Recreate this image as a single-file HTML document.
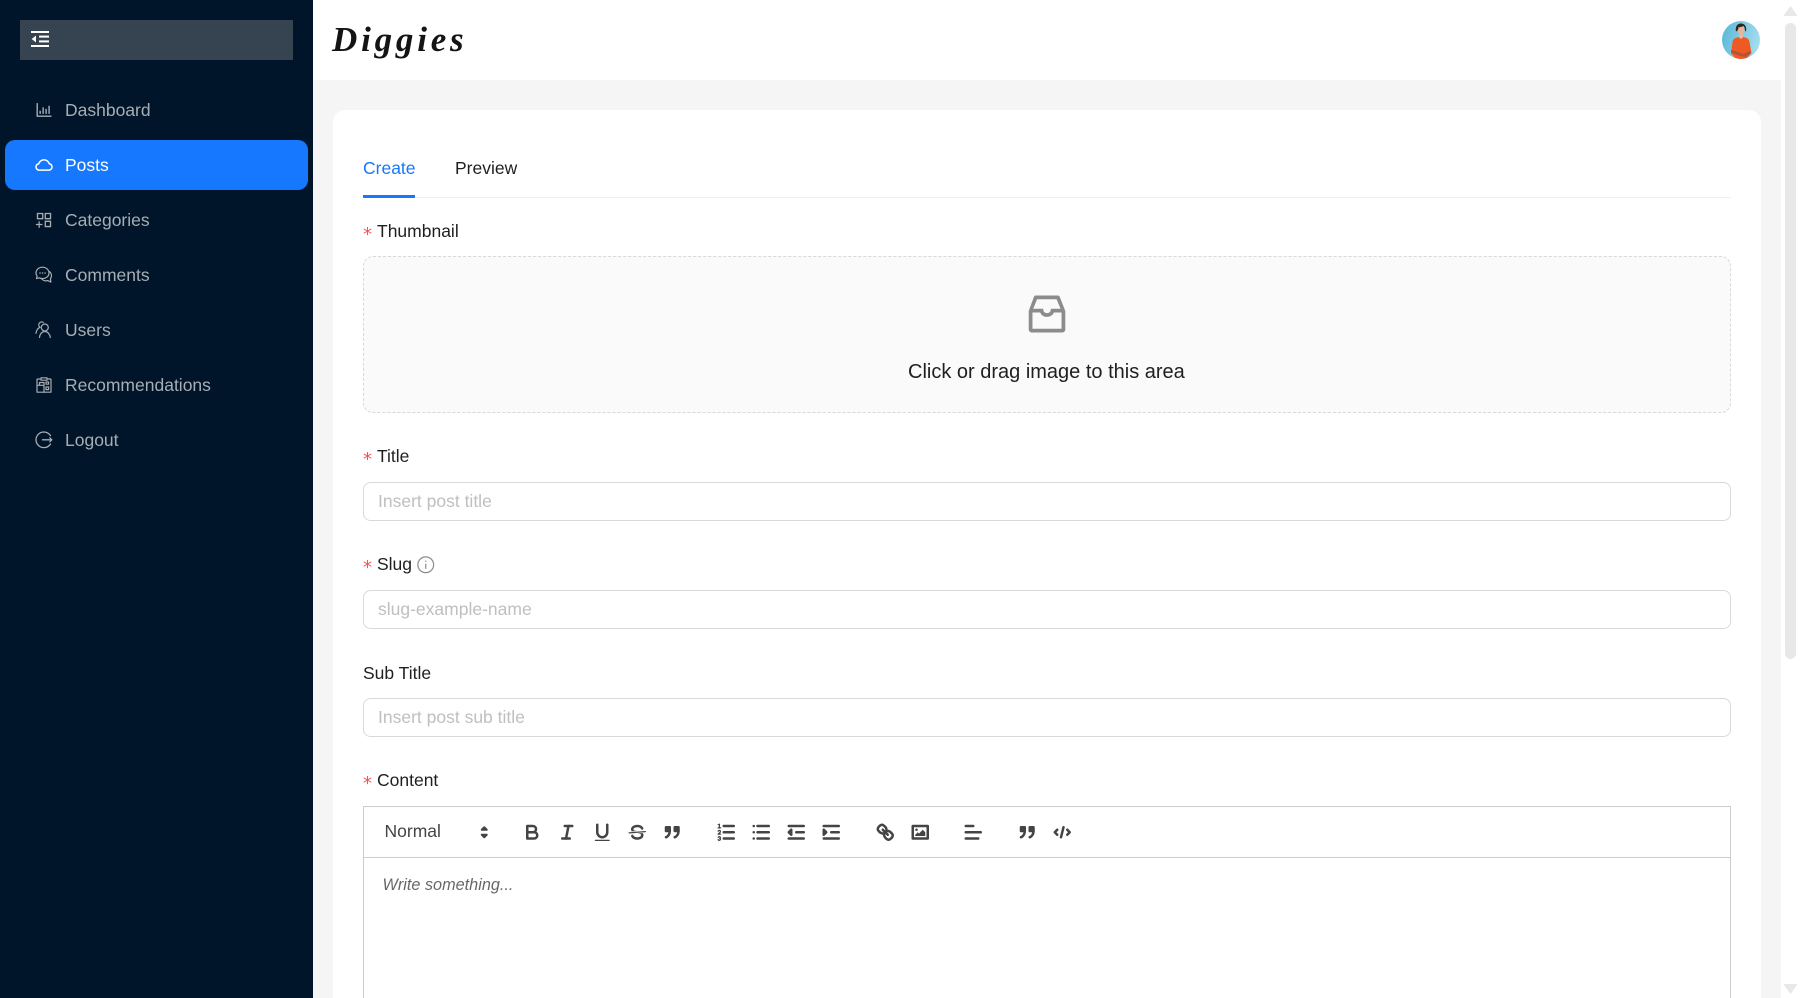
<!DOCTYPE html>
<html>
<head>
<meta charset="utf-8">
<title>Diggies</title>
<style>
html,body{margin:0;padding:0;width:1800px;height:998px;overflow:hidden;background:#fff;font-family:"Liberation Sans",Arial,sans-serif;font-size:17.5px;color:#1f1f1f}
#r{position:relative;width:1800px;height:998px;overflow:hidden}
.a{position:absolute}
.t{position:absolute;white-space:nowrap;line-height:24px}
.m{color:#a6adb4;left:65px}
.i{position:absolute;left:33.75px;width:20px;height:20px;fill:#a6adb4}
.s{position:absolute;width:17.5px;height:17.5px;fill:none;stroke:#a6adb4;stroke-width:1.2;stroke-linecap:round;stroke-linejoin:round}
.inp{position:absolute;left:363px;width:1368px;box-sizing:border-box;border:1px solid #d9d9d9;border-radius:7.5px;background:#fff}
.ph{color:#bfbfbf;left:378px}
.req{position:absolute;left:363px;color:#ff4d4f;font-family:"DejaVu Sans",sans-serif;font-size:18px;line-height:24px}
.q{position:absolute;top:820.7px;width:22.5px;height:22.5px;fill:none;stroke:#444;stroke-width:2;stroke-linecap:round;stroke-linejoin:round}
.q .f{fill:#444;stroke:none}
.q .th{stroke-width:1}
</style>
</head>
<body>
<div id="r">
<!-- sidebar -->
<div class="a" style="left:0;top:0;width:313px;height:998px;background:#001529"></div>
<div class="a" style="left:20px;top:20px;width:273px;height:40px;background:#364351"></div>
<svg class="a" style="left:31px;top:31px" width="18" height="16" viewBox="0 0 18 16" fill="#fff"><rect x="0" y="0" width="18" height="2"/><rect x="0" y="14" width="18" height="2"/><rect x="8" y="4.6" width="10" height="2"/><rect x="8" y="9.4" width="10" height="2"/><path d="M5 4.6v6.8L.6 8z"/></svg>

<div class="a" style="left:5px;top:140px;width:303px;height:50px;background:#1677ff;border-radius:10px"></div>

<svg class="i" style="top:100px" viewBox="0 0 1024 1024"><path d="M888 792H200V168c0-4.4-3.6-8-8-8h-56c-4.4 0-8 3.6-8 8v688c0 4.4 3.6 8 8 8h752c4.4 0 8-3.6 8-8v-56c0-4.4-3.6-8-8-8zm-600-80h56c4.4 0 8-3.6 8-8V560c0-4.4-3.6-8-8-8h-56c-4.4 0-8 3.6-8 8v144c0 4.4 3.6 8 8 8zm152 0h56c4.4 0 8-3.6 8-8V384c0-4.4-3.6-8-8-8h-56c-4.4 0-8 3.6-8 8v320c0 4.4 3.6 8 8 8zm152 0h56c4.4 0 8-3.6 8-8V462c0-4.4-3.6-8-8-8h-56c-4.4 0-8 3.6-8 8v242c0 4.4 3.6 8 8 8zm152 0h56c4.4 0 8-3.6 8-8V304c0-4.4-3.6-8-8-8h-56c-4.4 0-8 3.6-8 8v400c0 4.4 3.6 8 8 8z"/></svg>
<div class="t m" style="top:97.5px">Dashboard</div>

<svg class="i" style="top:155px;fill:#fff" viewBox="0 0 1024 1024"><path d="M811.4 418.7C765.6 297.9 648.9 212 512.2 212S258.8 297.8 213 418.6C127.3 441.1 64 519.1 64 612c0 110.5 89.5 200 199.9 200h496.2C870.5 812 960 722.5 960 612c0-92.7-63.1-170.7-148.6-193.3zm36.3 281a123.07 123.07 0 0 1-87.6 36.3H263.9c-33.1 0-64.2-12.9-87.6-36.3A123.3 123.3 0 0 1 140 612c0-28 9.1-54.3 26.2-76.3a125.7 125.7 0 0 1 66.1-43.7l37.9-9.9 13.9-36.6c8.6-22.8 20.6-44.1 35.7-63.4a245.6 245.6 0 0 1 52.4-49.9c41.1-28.9 89.5-44.2 140-44.2s98.9 15.3 140 44.2c19.9 14 37.5 30.8 52.4 49.9 15.1 19.3 27.1 40.6 35.7 63.4l13.8 36.5 37.8 10c54.3 14.5 92.1 63.8 92.1 120 0 33.1-12.9 64.3-36.3 87.7z"/></svg>
<div class="t m" style="top:153px;color:#fff">Posts</div>

<svg class="i" style="top:210px" viewBox="0 0 1024 1024"><path d="M464 144H160c-8.8 0-16 7.2-16 16v304c0 8.8 7.2 16 16 16h304c8.8 0 16-7.2 16-16V160c0-8.8-7.2-16-16-16zm-52 268H212V212h200v200zm452-268H560c-8.8 0-16 7.2-16 16v304c0 8.8 7.2 16 16 16h304c8.8 0 16-7.2 16-16V160c0-8.8-7.2-16-16-16zm-52 268H612V212h200v200zm52 132H560c-8.8 0-16 7.2-16 16v304c0 8.8 7.2 16 16 16h304c8.8 0 16-7.2 16-16V560c0-8.8-7.2-16-16-16zm-52 268H612V612h200v200zM424 712H296V584c0-4.4-3.6-8-8-8h-48c-4.4 0-8 3.6-8 8v128H104c-4.4 0-8 3.6-8 8v48c0 4.4 3.6 8 8 8h128v128c0 4.4 3.6 8 8 8h48c4.4 0 8-3.6 8-8V776h128c4.4 0 8-3.6 8-8v-48c0-4.4-3.6-8-8-8z"/></svg>
<div class="t m" style="top:208px">Categories</div>

<svg class="s" style="left:34.5px;top:266px" viewBox="0 0 17.5 17.5"><path d="M7.5 1.2C3.8 1.2 1 3.8 1 7c0 1.2.4 2.3 1.1 3.2L1.5 12.6l2.6-.8c1 .5 2.1.8 3.4.8 3.7 0 6.5-2.5 6.5-5.6S11.2 1.2 7.5 1.2z"/><path d="M14.4 5.5c1.3 1 2.1 2.5 2.1 4.1 0 1.2-.4 2.2-1.1 3.1l.5 3.4-3.1-1.500c-2.6.7-5.2-.2-6.4-2"/><path d="M5 7h.01M7.500 7h.01M10 7h.01" stroke-width="1.5"/></svg>
<div class="t m" style="top:263px">Comments</div>

<svg class="s" style="left:35px;top:321px" viewBox="0 0 17.5 17.5"><circle cx="9.8" cy="6.5" r="3.5"/><path d="M4.500 16.500c.3-3.500 2.400-6 5.300-6s5 2.500 5.500 6"/><path d="M8.300 1.300C6.800.5 4.700 1 4 2.700c-.6 1.400 0 2.900 1 3.600C3 7.200 1.300 9.500 1 12.300"/></svg>
<div class="t m" style="top:318px">Users</div>

<svg class="s" style="left:35px;top:376px" viewBox="0 0 17.5 17.5"><path d="M5 3H2.800c-.5 0-.8.3-.8.8V16.200h14V3.800c0-.5-.3-.8-.8-.8H13"/><path d="M6 1.800h6v2.400H6zM2 9.300h7v6.900M9 9.300V6.500H4.500v2.800"/><rect x="11" y="6" width="2.6" height="2.2"/><rect x="11" y="11" width="2.6" height="2.6"/></svg>
<div class="t m" style="top:373px">Recommendations</div>

<svg class="s" style="left:35px;top:431px;stroke-width:1.3" viewBox="0 0 17.5 17.5"><path d="M15.500 4.600C14 2.400 11.600 1 8.900 1 4.500 1 1 4.500 1 8.800s3.500 7.800 7.900 7.800c2.800 0 5.200-1.400 6.600-3.600"/><path d="M7.500 8.800h9.300M14.800 6.800l2 2-2 2"/></svg>
<div class="t m" style="top:428px">Logout</div>

<!-- header -->
<div class="a" style="left:313px;top:0;width:1468px;height:80px;background:#fff"></div>
<div class="a" style="left:313px;top:80px;width:1468px;height:918px;background:#f5f5f5"></div>
<div class="t" style="left:332px;top:18px;font-family:'Liberation Serif',serif;font-style:italic;font-weight:bold;font-size:35px;line-height:44px;letter-spacing:3.8px;color:#141414">Diggies</div>

<svg class="a" style="left:1721px;top:20px" width="40" height="40" viewBox="0 0 40 40">
<defs><linearGradient id="g" x1="0" x2="1" y1="0.3" y2="0.6"><stop offset="0" stop-color="#5cb8d8"/><stop offset="1" stop-color="#a8def0"/></linearGradient><clipPath id="c"><circle cx="20" cy="20" r="19"/></clipPath></defs>
<g clip-path="url(#c)"><rect width="40" height="40" fill="url(#g)"/>
<path d="M10 33l1.500-11c.4-2.600 2-3.800 4.500-4.500l4-1 4 1c2.500.7 4.100 1.900 4.500 4.500L30.500 33 26 38 20 40l-6-2z" fill="#ee5a24"/>
<path d="M10 30l7 2 5 2 7-3 1 2.500-6 3.500-6-1.500-8-3z" fill="#b8503a"/>
<path d="M18 13h4v4.500l-2 1.500-2-1.500z" fill="#e6b8a0"/>
<ellipse cx="20" cy="10" rx="3.500" ry="4.300" fill="#e4b49c"/>
<path d="M15 11.500c-1-4.500 1-8 5-8s6 3.500 5 8c-.7-.3-1.200-1-1.200-2.300 0-1.500-.6-2.700-1.600-3.200-1.800 1-3.200 1.300-4.700 1.300-.2 1.800-.3 3.400-2.500 4.200z" fill="#2e2420"/></g></svg>

<!-- card -->
<div class="a" style="left:333px;top:110px;width:1428px;height:888px;background:#fff;border-radius:12px 12px 0 0"></div>

<!-- tabs -->
<div class="a" style="left:363px;top:197px;width:1368px;height:1px;background:#efefef"></div>
<div class="a" style="left:363px;top:195px;width:52px;height:3px;background:#1677ff"></div>
<div class="t" style="left:363px;top:156px;color:#1677ff">Create</div>
<div class="t" style="left:455px;top:156px">Preview</div>

<!-- thumbnail -->
<div class="req" style="top:223px">*</div>
<div class="t" style="left:377px;top:219px">Thumbnail</div>
<div class="a" style="left:363px;top:256px;width:1368px;height:157px;box-sizing:border-box;background:#fafafa;border:1px dashed #d9d9d9;border-radius:10px"></div>
<svg class="a" style="left:1022px;top:288.5px" width="50" height="50" viewBox="0 0 1024 1024" fill="#8c8c8c"><path d="M885.2 446.3l-.2-.8-112.2-285.1c-5-16.1-19.9-27.2-36.8-27.2H281.2c-17 0-32.1 11.3-36.9 27.6L139.4 443l-.3.7-.2.8c-1.3 4.9-1.7 9.9-1 14.8-.1 1.6-.2 3.2-.2 4.8V830a60.9 60.9 0 0 0 60.8 60.8h627.2c33.5 0 60.8-27.3 60.9-60.8V464.1c0-1.3 0-2.6-.1-3.7.4-4.9 0-9.6-1.3-14.1zm-295.8-43l-.3 15.7c-.8 44.9-31.8 75.1-77.1 75.1-22.1 0-41.1-7.1-54.8-20.6S436 441.2 435.6 419l-.3-15.7H229.5L309 210h399.2l81.7 193.3H589.4zm-375 76.8h157.3c24.3 57.1 76 90.8 140.4 90.8 33.7 0 65-9.4 90.3-27.2 22.2-15.6 39.5-37.4 50.7-63.6h156.5V814H214.4V480.1z"/></svg>
<div class="t" style="left:908px;top:360px;font-size:20px">Click or drag image to this area</div>

<!-- title -->
<div class="req" style="top:448px">*</div>
<div class="t" style="left:377px;top:444px">Title</div>
<div class="inp" style="top:482px;height:39px"></div>
<div class="t ph" style="top:488.5px">Insert post title</div>

<!-- slug -->
<div class="req" style="top:556px">*</div>
<div class="t" style="left:377px;top:552px">Slug</div>
<svg class="a" style="left:417px;top:556px" width="17.5" height="17.5" viewBox="0 0 17.5 17.5" fill="none" stroke="#8c8c8c" stroke-width="1.2"><circle cx="8.75" cy="8.75" r="7.9"/><path d="M8.75 7.600v5.300M8.750 4.600v1.300"/></svg>
<div class="inp" style="top:590px;height:39px"></div>
<div class="t ph" style="top:597px">slug-example-name</div>

<!-- sub title -->
<div class="t" style="left:363px;top:660.5px">Sub Title</div>
<div class="inp" style="top:698px;height:39px"></div>
<div class="t ph" style="top:705px">Insert post sub title</div>

<!-- content -->
<div class="req" style="top:772px">*</div>
<div class="t" style="left:377px;top:768px">Content</div>
<div class="a" style="left:363px;top:806px;width:1368px;height:192px;box-sizing:border-box;border:1px solid #ccc;border-bottom:0"></div>
<div class="a" style="left:363px;top:857px;width:1368px;height:1px;background:#ccc"></div>
<div class="t" style="left:384.5px;top:819px;color:#444">Normal</div>
<svg class="q" style="left:472.5px;stroke-width:1.6" viewBox="0 0 18 18"><polygon class="f" points="7 11 9 13 11 11"/><polygon class="f" points="7 7 9 5 11 7"/><polygon points="7 11 9 13 11 11 7 11"/><polygon points="7 7 9 5 11 7 7 7"/></svg>
<svg class="q" style="left:520.7px" viewBox="0 0 18 18"><path d="M5,4H9.5A2.5,2.5,0,0,1,12,6.5v0A2.5,2.5,0,0,1,9.5,9H5V4Z"/><path d="M5,9h5.5A2.5,2.5,0,0,1,13,11.5v0A2.5,2.5,0,0,1,10.5,14H5V9Z"/></svg>
<svg class="q" style="left:555.7px" viewBox="0 0 18 18"><line x1="7" x2="13" y1="4" y2="4"/><line x1="5" x2="11" y1="14" y2="14"/><line x1="8" x2="10" y1="14" y2="4"/></svg>
<svg class="q" style="left:590.7px" viewBox="0 0 18 18"><path d="M5,3V9a4.012,4.012,0,0,0,4,4H9a4.012,4.012,0,0,0,4-4V3"/><rect class="f" height="1" rx="0.5" ry="0.5" width="12" x="3" y="15"/></svg>
<svg class="q" style="left:625.7px" viewBox="0 0 18 18"><line class="th" x1="15.5" x2="2.5" y1="8.5" y2="9.5"/><path class="f" d="M9.007,8C6.542,7.791,6,7.519,6,6.5,6,5.792,7.283,5,9,5c1.571,0,2.765.679,2.969,1.309a1,1,0,0,0,1.9-.617C13.356,4.106,11.354,3,9,3,6.2,3,4,4.538,4,6.5a3.2,3.2,0,0,0,.5,1.843Z"/><path class="f" d="M8.984,10C11.457,10.208,12,10.479,12,11.5c0,.708-1.283,1.5-3,1.5-1.571,0-2.765-.679-2.969-1.309a1,1,0,1,0-1.9.617C4.644,13.894,6.646,15,9,15c2.8,0,5-1.538,5-3.5a3.2,3.2,0,0,0-.5-1.843Z"/></svg>
<svg class="q" style="left:660.7px" viewBox="0 0 18 18"><rect class="f" height="3" width="3" x="4" y="5"/><rect class="f" height="3" width="3" x="11" y="5"/><rect height="3" width="3" x="4" y="5"/><rect height="3" width="3" x="11" y="5"/><path d="M7,8c0,4.031-3,5-3,5"/><path d="M14,8c0,4.031-3,5-3,5"/></svg>
<svg class="q" style="left:714.7px" viewBox="0 0 18 18"><line x1="7" x2="15" y1="4" y2="4"/><line x1="7" x2="15" y1="9" y2="9"/><line x1="7" x2="15" y1="14" y2="14"/><line class="th" x1="2.5" x2="4.5" y1="5.5" y2="5.5"/><path class="f" d="M3.5,6A0.5,0.5,0,0,1,3,5.5V3.085l-0.276.138A0.5,0.5,0,0,1,2.053,3c-0.124-.247-0.023-0.324.224-0.447l1-.5A0.5,0.5,0,0,1,4,2.5v3A0.5,0.5,0,0,1,3.5,6Z"/><path class="th" d="M4.5,10.5h-2c0-.234,1.85-1.076,1.85-2.234A0.959,0.959,0,0,0,2.5,8.156"/><path class="th" d="M2.5,14.846a0.959,0.959,0,0,0,1.85-.109A0.7,0.7,0,0,0,3.75,14a0.688,0.688,0,0,0,.6-0.736,0.959,0.959,0,0,0-1.85-.109"/></svg>
<svg class="q" style="left:749.7px" viewBox="0 0 18 18"><line x1="6" x2="15" y1="4" y2="4"/><line x1="6" x2="15" y1="9" y2="9"/><line x1="6" x2="15" y1="14" y2="14"/><line x1="3" x2="3" y1="4" y2="4"/><line x1="3" x2="3" y1="9" y2="9"/><line x1="3" x2="3" y1="14" y2="14"/></svg>
<svg class="q" style="left:784.7px" viewBox="0 0 18 18"><line x1="3" x2="15" y1="14" y2="14"/><line x1="3" x2="15" y1="4" y2="4"/><line x1="9" x2="15" y1="9" y2="9"/><polyline class="f" points="5 7 5 11 3 9 5 7"/><polyline points="5 7 5 11 3 9 5 7"/></svg>
<svg class="q" style="left:819.7px" viewBox="0 0 18 18"><line x1="3" x2="15" y1="14" y2="14"/><line x1="3" x2="15" y1="4" y2="4"/><line x1="9" x2="15" y1="9" y2="9"/><polyline class="f" points="3 7 3 11 5 9 3 7"/><polyline points="3 7 3 11 5 9 3 7"/></svg>
<svg class="q" style="left:873.7px" viewBox="0 0 18 18"><line x1="7" x2="11" y1="7" y2="11"/><path d="M8.9,4.577a3.476,3.476,0,0,1,.36,4.679A3.476,3.476,0,0,1,4.577,8.9C3.185,7.5,2.035,6.4,4.217,4.217S7.5,3.185,8.9,4.577Z"/><path d="M13.423,9.1a3.476,3.476,0,0,0-4.679-.36,3.476,3.476,0,0,0,.36,4.679c1.392,1.392,2.5,2.542,4.679.36S14.815,10.5,13.423,9.1Z"/></svg>
<svg class="q" style="left:908.7px" viewBox="0 0 18 18"><rect height="10" width="12" x="3" y="4"/><circle class="f" cx="6" cy="7" r="1"/><polyline class="f" points="5 12 5 11 7 9 8 10 11 7 13 9 13 12 5 12"/></svg>
<svg class="q" style="left:961.7px" viewBox="0 0 18 18"><line x1="3" x2="15" y1="9" y2="9"/><line x1="3" x2="13" y1="14" y2="14"/><line x1="3" x2="9" y1="4" y2="4"/></svg>
<svg class="q" style="left:1015.7px" viewBox="0 0 18 18"><rect class="f" height="3" width="3" x="4" y="5"/><rect class="f" height="3" width="3" x="11" y="5"/><rect height="3" width="3" x="4" y="5"/><rect height="3" width="3" x="11" y="5"/><path d="M7,8c0,4.031-3,5-3,5"/><path d="M14,8c0,4.031-3,5-3,5"/></svg>
<svg class="q" style="left:1050.7px" viewBox="0 0 18 18"><polyline points="5 7 3 9 5 11"/><polyline points="13 7 15 9 13 11"/><line x1="10" x2="8" y1="5" y2="13"/></svg>
<div class="t" style="left:382.5px;top:873px;font-size:16.25px;font-style:italic;color:rgba(0,0,0,.6)">Write something...</div>

<!-- scrollbar -->
<div class="a" style="left:1781px;top:0;width:19px;height:998px;background:#fff"></div>
<div class="a" style="left:1785px;top:23px;width:11px;height:636px;background:#e8e8e8;border-radius:6px"></div>
<svg class="a" style="left:1784px;top:6px" width="13" height="10" viewBox="0 0 13 10" fill="#e8e8e8"><path d="M6.5 0L13 9v1H0V9z"/></svg>
<svg class="a" style="left:1784px;top:984px" width="13" height="10" viewBox="0 0 13 10" fill="#e8e8e8"><path d="M6.5 10L13 1V0H0v1z"/></svg>
</div>
</body>
</html>
